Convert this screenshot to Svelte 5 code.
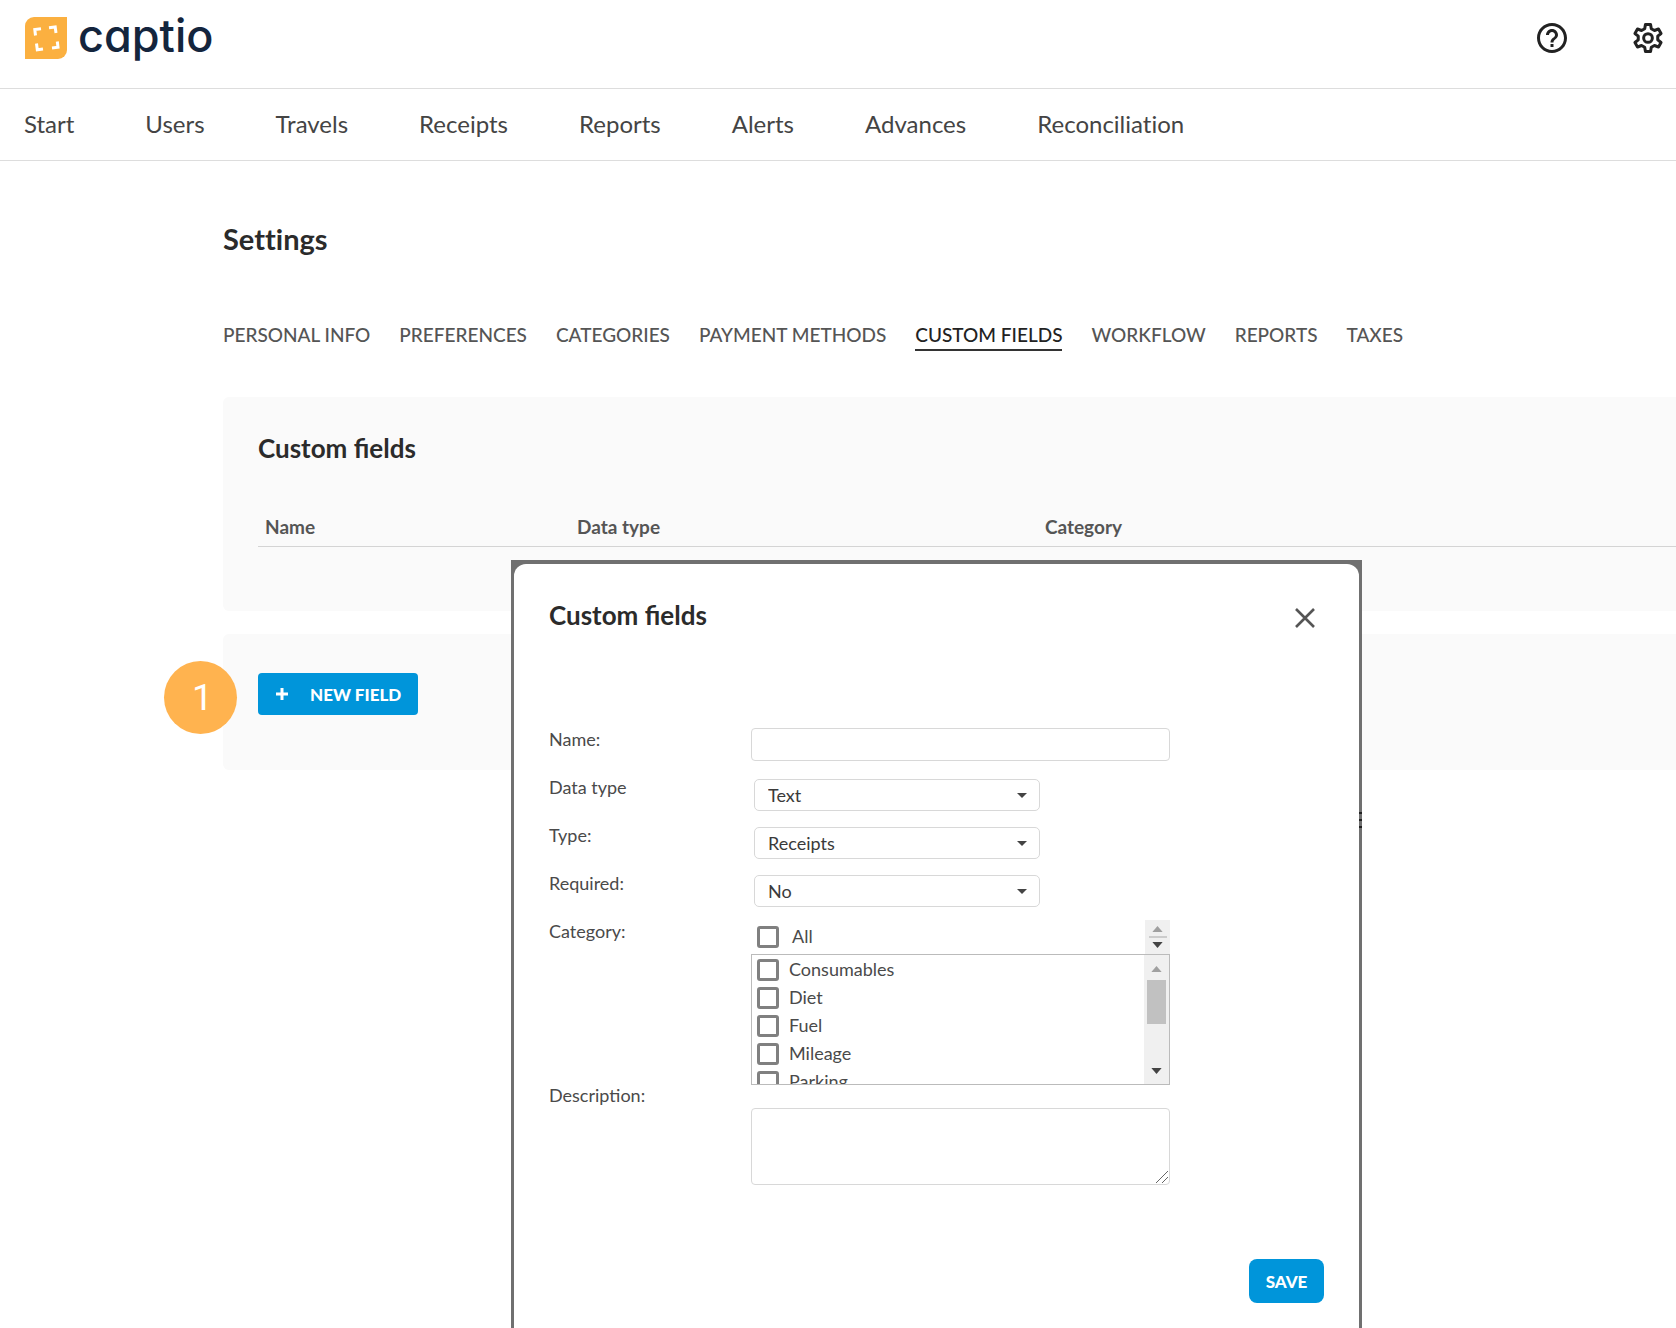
<script>
  const navItems = ["Start", "Users", "Travels", "Receipts", "Reports", "Alerts", "Advances", "Reconciliation"];
  const tabs = [
    "Personal info",
    "Preferences",
    "Categories",
    "Payment methods",
    "Custom fields",
    "Workflow",
    "Reports",
    "Taxes"
  ];
  const columns = ["Name", "Data type", "Category"];

  let activeTab = "Custom fields";
  let open = true;

  let field = { name: "", dataType: "Text", type: "Receipts", required: "No", description: "" };

  const selects = [
    { key: "dataType", label: "Data type", options: ["Text", "Number", "Date"] },
    { key: "type", label: "Type:", options: ["Receipts", "Reports", "Travels"] },
    { key: "required", label: "Required:", options: ["No", "Yes"] }
  ];

  let categories = ["Consumables", "Diet", "Fuel", "Mileage", "Parking"].map(name => ({ name, checked: false }));

  $: allChecked = categories.every(c => c.checked);

  function toggleAll(e) {
    const checked = e.target.checked;
    categories = categories.map(c => ({ ...c, checked }));
  }
</script>

<div class="page">
  <header class="topbar">
    <a class="brand" href="#start">
      <svg class="brand-mark" viewBox="0 0 42 42" aria-hidden="true">
        <path d="M9 0H42V33A9 9 0 0 1 33 42H0V9A9 9 0 0 1 9 0Z" fill="#fbb040" />
        <g fill="none" stroke="#fff" stroke-width="3">
          <path d="M10.500 18.500L9.800 12.500L16 11.700" />
          <path d="M24 10.700L30.200 10L31 16" />
          <path d="M32.300 24.500L33 30.300L27 31" />
          <path d="M18 32L12.300 32.800L11.500 26.500" />
        </g>
      </svg>
      <span class="brand-name">captio</span>
    </a>
    <div class="actions">
      <button class="icon-btn" aria-label="Help">
        <svg viewBox="0 0 24 24"><path d="M11 18h2v-2h-2v2zm1-16C6.480 2 2 6.480 2 12s4.480 10 10 10 10-4.480 10-10S17.520 2 12 2zm0 18c-4.410 0-8-3.590-8-8s3.590-8 8-8 8 3.590 8 8-3.590 8-8 8zm0-14c-2.210 0-4 1.790-4 4h2c0-1.100.9-2 2-2s2 .9 2 2c0 2-3 1.750-3 5h2c0-2.250 3-2.500 3-5 0-2.210-1.790-4-4-4z" /></svg>
      </button>
      <button class="icon-btn" aria-label="Settings">
        <svg viewBox="0 0 24 24">
          <g fill="none" stroke="#222" stroke-width="2" stroke-linejoin="round">
            <path d="M10.300 3H13.700L14.200 5.800L16.300 7L19 6L20.700 9L18.500 10.800V13.200L20.700 15L19 18L16.300 17L14.200 18.200L13.700 21H10.300L9.800 18.200L7.700 17L5 18L3.300 15L5.500 13.200V10.800L3.300 9L5 6L7.700 7L9.800 5.800Z" />
            <circle cx="12" cy="12" r="2.900" />
          </g>
        </svg>
      </button>
    </div>
  </header>

  <nav class="nav">
    {#each navItems as item}
      <a href="#{item.toLowerCase()}">{item}</a>
    {/each}
  </nav>

  <main class="content">
    <h1>Settings</h1>

    <div class="tabs">
      {#each tabs as tab}
        <button class="tab" class:active={tab === activeTab} on:click={() => (activeTab = tab)}>{tab}</button>
      {/each}
    </div>

    <section class="panel list-panel">
      <h2>Custom fields</h2>
      <table>
        <thead>
          <tr>
            {#each columns as column}
              <th>{column}</th>
            {/each}
          </tr>
        </thead>
      </table>
    </section>

    <section class="panel new-panel">
      <span class="step">1</span>
      <button class="new-btn" on:click={() => (open = true)}>
        <svg viewBox="0 0 12 12" aria-hidden="true"><path d="M6 0V12M0 6H12" stroke="#fff" stroke-width="3" /></svg>
        New field
      </button>
    </section>
  </main>

  {#if open}
    <div class="layer">
      <div class="frame">
        <form class="dialog" on:submit|preventDefault>
          <div class="dialog-head">
            <h2>Custom fields</h2>
            <button type="button" class="close" aria-label="Close" on:click={() => (open = false)}>
              <svg viewBox="0 0 20 20"><path d="M1 1L19 19M19 1L1 19" stroke="#555" stroke-width="2.600" /></svg>
            </button>
          </div>

          <div class="row">
            <label for="name">Name:</label>
            <input id="name" class="text" type="text" bind:value={field.name} />
          </div>

          {#each selects as s}
            <div class="row">
              <label for={s.key}>{s.label}</label>
              <div class="select">
                <select id={s.key} bind:value={field[s.key]}>
                  {#each s.options as option}
                    <option>{option}</option>
                  {/each}
                </select>
                <svg viewBox="0 0 10 5" aria-hidden="true"><path d="M0 0H10L5 5Z" /></svg>
              </div>
            </div>
          {/each}

          <div class="row category-row">
            <span class="label">Category:</span>
            <div class="category">
              <div class="all">
                <label class="check">
                  <input type="checkbox" checked={allChecked} on:change={toggleAll} />
                  <span>All</span>
                </label>
                <div class="mini-scroll">
                  <svg class="arrow dim" viewBox="0 0 12 7"><path d="M0 7L6 0L12 7Z" /></svg>
                  <hr />
                  <svg class="arrow" viewBox="0 0 12 7"><path d="M0 0H12L6 7Z" /></svg>
                </div>
              </div>
              <div class="listbox">
                <div class="items">
                  {#each categories as category}
                    <label class="check">
                      <input type="checkbox" bind:checked={category.checked} />
                      <span>{category.name}</span>
                    </label>
                  {/each}
                </div>
                <div class="scroll">
                  <svg class="arrow dim" viewBox="0 0 12 7"><path d="M0 7L6 0L12 7Z" /></svg>
                  <div class="thumb"></div>
                  <svg class="arrow" viewBox="0 0 12 7"><path d="M0 0H12L6 7Z" /></svg>
                </div>
              </div>
            </div>
          </div>

          <div class="row description-row">
            <label for="description">Description:</label>
            <div class="area">
              <textarea id="description" bind:value={field.description}></textarea>
              <svg class="grip" viewBox="0 0 12 12" aria-hidden="true"><path d="M0 12L12 0M6 12L12 6" stroke="#666" fill="none" /></svg>
            </div>
          </div>

          <button class="save">Save</button>
        </form>
        <div class="ticks"><i></i><i></i><i></i></div>
      </div>
    </div>
  {/if}
</div>

<style>
  :global(body) {
    background: #fff;
    color: #222;
    font-family: Lato, "Liberation Sans", sans-serif;
  }

  .page {
    position: relative;
    min-height: 100vh;
    overflow: hidden;
  }

  .page,
  .page :global(*) {
    box-sizing: border-box;
  }

  h1,
  h2 {
    margin: 0;
    color: #2b2b2b;
    font-weight: 700;
  }

  h1 {
    font-size: 29px;
    font-variant-ligatures: none;
    line-height: 36px;
  }

  h2 {
    font-size: 26px;
    line-height: 32px;
  }

  button {
    border: 0;
    padding: 0;
    background: none;
    font-family: inherit;
    cursor: pointer;
  }

  .topbar {
    display: flex;
    justify-content: space-between;
    height: 89px;
    padding: 12px 10px 0 25px;
    border-bottom: 1px solid #ddd;
  }

  .brand {
    display: flex;
    gap: 11px;
    height: 52px;
    align-items: center;
    text-decoration: none;
  }

  .brand-mark {
    width: 42px;
    height: 42px;
  }

  .brand-name {
    color: #14253d;
    font-family: Inter, Lato, sans-serif;
    font-feature-settings: "cv11";
    font-size: 45px;
    font-weight: 500;
    line-height: 48px;
    padding-bottom: 5px;
  }

  .actions {
    display: flex;
    gap: 60px;
    height: 52px;
    align-items: center;
  }

  .icon-btn,
  .icon-btn svg {
    display: block;
    width: 36px;
    height: 36px;
    fill: #222;
  }

  .nav {
    display: flex;
    gap: 71px;
    height: 72px;
    padding: 0 24px 1px;
    align-items: center;
    border-bottom: 1px solid #ddd;
  }

  .nav a {
    color: #444;
    font-size: 24px;
    font-variant-ligatures: none;
    line-height: 28px;
    text-decoration: none;
  }

  .content {
    padding: 60px 0 0 223px;
  }

  .tabs {
    display: flex;
    gap: 29px;
    margin-top: 64px;
  }

  .tab {
    border-bottom: 2px solid transparent;
    color: #555;
    font-size: 19px;
    font-weight: 500;
    line-height: 28px;
    text-transform: uppercase;
    white-space: nowrap;
  }

  .tab.active {
    border-color: #333;
    color: #222;
  }

  .panel {
    border-radius: 6px 0 0 6px;
    background: #fafafa;
  }

  .list-panel {
    height: 214px;
    margin-top: 46px;
    padding: 35px 0 0 35px;
  }

  table {
    width: 100%;
    margin-top: 48px;
    border-collapse: collapse;
    border-bottom: 1px solid #d4d4d4;
  }

  th {
    padding: 2px 7px 6px;
    color: #555;
    font-size: 19px;
    font-weight: 700;
    line-height: 26px;
    text-align: left;
  }

  th:nth-child(1) {
    width: 22%;
  }

  th:nth-child(2) {
    width: 33%;
  }

  .new-panel {
    position: relative;
    height: 136px;
    margin-top: 23px;
    padding: 39px 35px;
  }

  .step {
    position: absolute;
    top: 27px;
    left: -59px;
    width: 73px;
    height: 73px;
    padding-left: 4px;
    border-radius: 50%;
    background: #ffb34f;
    color: #fff;
    font-family: Roboto, "Liberation Sans", sans-serif;
    font-size: 37px;
    line-height: 73px;
    text-align: center;
  }

  .new-btn {
    display: flex;
    gap: 22px;
    align-items: center;
    height: 42px;
    padding: 0 17px 0 18px;
    border-radius: 4px;
    background: #0095da;
    color: #fff;
    font-size: 17px;
    font-weight: 900;
    text-transform: uppercase;
  }

  .new-btn svg {
    width: 12px;
    height: 12px;
  }

  .layer {
    position: absolute;
    top: 560px;
    right: 0;
    bottom: 0;
    left: 197px;
    display: flex;
    justify-content: center;
  }

  .frame {
    position: relative;
    width: 851px;
    padding: 4px 3px 0;
    background: #707070;
  }

  .dialog {
    display: flex;
    flex-direction: column;
    height: 100%;
    padding: 35px 35px 0;
    border-radius: 12px 12px 0 0;
    background: #fff;
  }

  .dialog-head {
    display: flex;
    justify-content: space-between;
    align-items: flex-end;
    margin-bottom: 97px;
    padding-right: 9px;
  }

  .close {
    padding-bottom: 3px;
  }

  .close svg {
    display: block;
    width: 20px;
    height: 20px;
  }

  .row {
    display: grid;
    grid-template-columns: 202px 419px;
    align-items: start;
    height: 48px;
    color: #4a4a4a;
    font-size: 18px;
    line-height: 22px;
  }

  .text,
  textarea {
    display: block;
    width: 100%;
    border: 1px solid #d8d8d8;
    border-radius: 4px;
    background: #fff;
    font: inherit;
  }

  .text {
    height: 33px;
  }

  .select {
    position: relative;
    width: 286px;
    margin: 3px 0 0 3px;
  }

  select {
    display: block;
    width: 100%;
    height: 32px;
    padding: 0 13px 1px;
    border: 1px solid #d8d8d8;
    border-radius: 5px;
    background: #fff;
    color: #3a3a3a;
    font: inherit;
    appearance: none;
  }

  .select svg {
    position: absolute;
    top: 14px;
    right: 13px;
    width: 10px;
    height: 5px;
    fill: #444;
    pointer-events: none;
  }

  .category-row {
    height: 164px;
  }

  .all {
    display: flex;
    justify-content: space-between;
    height: 34px;
    padding-left: 6px;
  }

  .check {
    display: flex;
    gap: 10px;
    align-items: center;
    height: 28px;
  }

  .check span {
    padding-bottom: 2px;
  }

  .all .check {
    gap: 13px;
    height: 34px;
  }

  .check input {
    width: 22px;
    height: 22px;
    margin: 0;
    border: 3px solid #808080;
    border-radius: 3px;
    background: #fff;
    appearance: none;
  }

  .check input:checked {
    background: #0095da;
  }

  .listbox {
    display: flex;
    height: 131px;
    border: 1px solid #bbb;
  }

  .items {
    flex: 1;
    padding: 1px 5px;
    overflow: hidden;
  }

  .mini-scroll,
  .scroll {
    display: flex;
    flex-direction: column;
    align-items: center;
    width: 25px;
    background: #f0f0f0;
  }

  .mini-scroll {
    justify-content: space-between;
    padding: 6px 0;
  }

  .mini-scroll hr {
    width: 18px;
    margin: 0;
    border: 0;
    border-top: 2px solid #ccc;
  }

  .scroll {
    padding: 11px 0 10px;
  }

  .arrow {
    width: 11px;
    height: 6px;
    fill: #444;
  }

  .arrow.dim {
    fill: #a0a0a0;
  }

  .thumb {
    width: 19px;
    height: 44px;
    margin: 8px 0 auto;
    background: #c1c1c1;
  }

  .description-row {
    height: 92px;
  }

  .area {
    position: relative;
    padding-top: 24px;
  }

  textarea {
    height: 77px;
    resize: none;
  }

  .grip {
    position: absolute;
    right: 2px;
    bottom: 2px;
    width: 12px;
    height: 12px;
  }

  .save {
    align-self: flex-end;
    width: 75px;
    height: 44px;
    margin-top: 83px;
    border-radius: 8px;
    background: #0095da;
    color: #fff;
    font-size: 17px;
    font-weight: 900;
    text-transform: uppercase;
  }

  .ticks {
    position: absolute;
    top: 252px;
    right: 0;
    display: grid;
    gap: 5px;
  }

  .ticks i {
    width: 3px;
    height: 2px;
    background: #222;
  }
</style>
